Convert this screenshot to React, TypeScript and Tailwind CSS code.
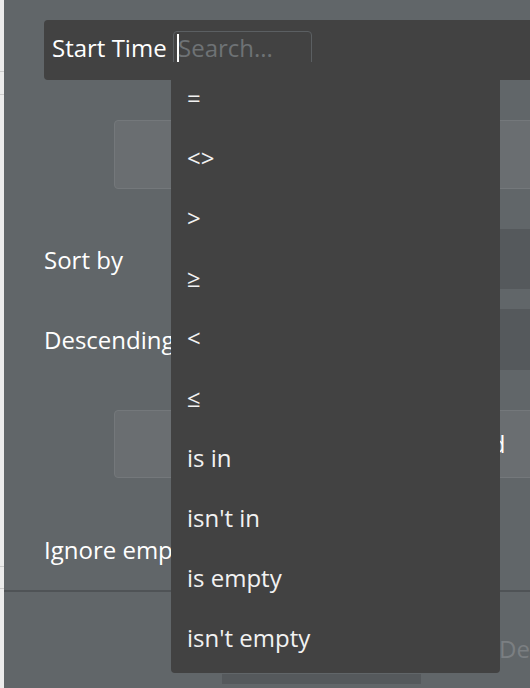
const operators = ["=", "<>", ">", "≥", "<", "≤", "is in", "isn't in", "is empty", "isn't empty"];

function OperatorMenu() {
  return (
    <div className="absolute left-[167px] top-[62px] flex h-[611px] w-[329px] flex-col gap-[20px] rounded-b-[4px] bg-[#424242] pl-[16px] pt-[16px]">
      {operators.map((op) => (
        <div key={op} className="flex h-[40px] items-center text-[#f2f2f2]">
          {op}
        </div>
      ))}
    </div>
  );
}

export default function App() {
  return (
    <div className="flex h-[688px] w-[530px] overflow-hidden font-['Open_Sans',sans-serif] text-[24px] leading-none">
      <div className="flex w-[4px] shrink-0 flex-col bg-[#ececec]">
        <div className="h-[71px]" />
        <div className="h-px bg-[#cdcdcd]" />
        <div className="h-[22px]" />
        <div className="h-px bg-[#cdcdcd]" />
        <div className="h-[471px]" />
        <div className="h-px bg-[#cdcdcd]" />
        <div className="h-[21px]" />
        <div className="h-px bg-[#cdcdcd]" />
      </div>

      <div className="relative flex min-w-0 flex-1 flex-col bg-[#616669]">
        {/* search header */}
        <div className="ml-[40px] mt-[20px] flex h-[60px] shrink-0 items-start rounded-l-[4px] bg-[#424242] pl-[8px]">
          <span className="mt-[28px] w-[121px] -translate-y-1/2 whitespace-nowrap text-white">Start Time</span>
          <div className="mt-[11px] flex h-[38px] w-[139px] items-center rounded-[4px] border border-[#5b5f62] pb-[4px] pl-[3px]">
            <span className="mr-[-1px] h-[28px] w-[2px] bg-white" />
            <span className="text-[#6e7275]">Search...</span>
          </div>
        </div>

        <div className="ml-[110px] mt-[40px] h-[69px] w-[440px] shrink-0 rounded-[4px] border border-[#74787b] bg-[#6a6e71]" />

        <div className="mt-[40px] flex h-[60px] shrink-0 items-center">
          <span className="w-[246px] pl-[40px] pt-[2px] text-white">Sort by</span>
          <div className="h-full flex-1 bg-[#55595c]" />
        </div>

        <div className="mt-[20px] flex h-[61px] shrink-0 items-center">
          <span className="w-[246px] whitespace-nowrap pl-[40px] pt-[1px] text-white">Descending</span>
          <div className="h-full flex-1 bg-[#55595c]" />
        </div>

        <div className="ml-[110px] mt-[40px] flex h-[68px] w-[440px] shrink-0 items-center rounded-[4px] border border-[#74787b] bg-[#6a6e71] pl-[346px] text-white">
          Add
        </div>

        <div className="mt-[40px] flex h-[62px] shrink-0 items-center">
          <span className="whitespace-nowrap pl-[40px] pt-[2px] text-white">Ignore empty constraints</span>
        </div>

        <div className="mt-[10px] h-[2px] shrink-0 bg-[#4f5356]" />

        <div className="mt-[39px] flex h-[36px] shrink-0 items-center pl-[495px] text-[#7b7f82]">
          Delete
        </div>
        <div className="ml-[218px] mt-[7px] h-[10px] w-[199px] shrink-0 bg-[#55595c]" />

        <OperatorMenu />
      </div>
    </div>
  );
}
